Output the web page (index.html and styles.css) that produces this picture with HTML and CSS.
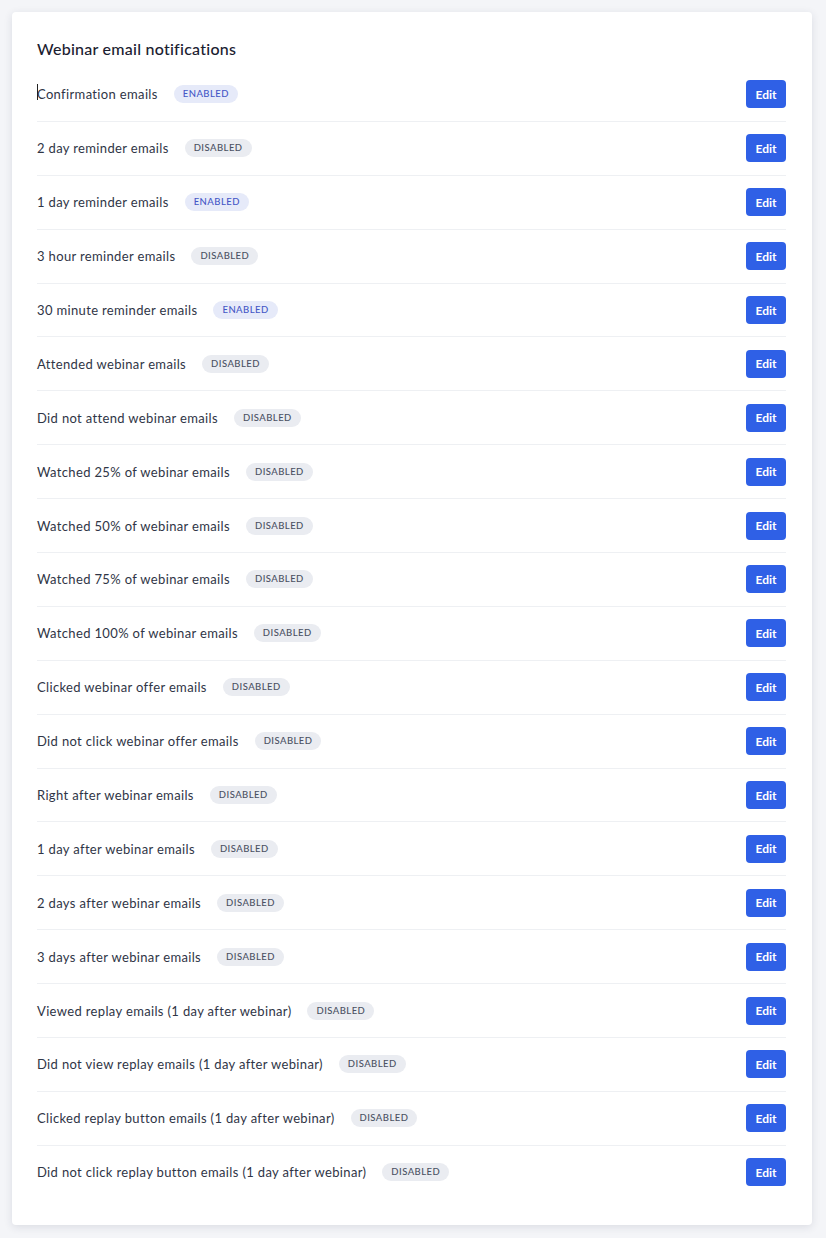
FILE: index.html
```html
<!DOCTYPE html>
<html lang="en">
<head>
    <meta charset="UTF-8">
    <meta name="viewport" content="width=device-width, initial-scale=1.0">
    <title>Webinar email notifications</title>
    <link rel="stylesheet" href="styles.css">
</head>
<body>
    <div class="card">
        <h2 class="card-title">Webinar email notifications</h2>

        <div class="notify-list">
            <div class="notify-row">
                <div class="notify-info"><span class="caret"></span><span class="notify-name">Confirmation emails</span><span class="badge badge-on">Enabled</span></div>
                <button class="edit-btn">Edit</button>
            </div>
            <div class="notify-row">
                <div class="notify-info"><span class="notify-name">2 day reminder emails</span><span class="badge">Disabled</span></div>
                <button class="edit-btn">Edit</button>
            </div>
            <div class="notify-row">
                <div class="notify-info"><span class="notify-name">1 day reminder emails</span><span class="badge badge-on">Enabled</span></div>
                <button class="edit-btn">Edit</button>
            </div>
            <div class="notify-row">
                <div class="notify-info"><span class="notify-name">3 hour reminder emails</span><span class="badge">Disabled</span></div>
                <button class="edit-btn">Edit</button>
            </div>
            <div class="notify-row">
                <div class="notify-info"><span class="notify-name">30 minute reminder emails</span><span class="badge badge-on">Enabled</span></div>
                <button class="edit-btn">Edit</button>
            </div>
            <div class="notify-row">
                <div class="notify-info"><span class="notify-name">Attended webinar emails</span><span class="badge">Disabled</span></div>
                <button class="edit-btn">Edit</button>
            </div>
            <div class="notify-row">
                <div class="notify-info"><span class="notify-name">Did not attend webinar emails</span><span class="badge">Disabled</span></div>
                <button class="edit-btn">Edit</button>
            </div>
            <div class="notify-row">
                <div class="notify-info"><span class="notify-name">Watched 25% of webinar emails</span><span class="badge">Disabled</span></div>
                <button class="edit-btn">Edit</button>
            </div>
            <div class="notify-row">
                <div class="notify-info"><span class="notify-name">Watched 50% of webinar emails</span><span class="badge">Disabled</span></div>
                <button class="edit-btn">Edit</button>
            </div>
            <div class="notify-row">
                <div class="notify-info"><span class="notify-name">Watched 75% of webinar emails</span><span class="badge">Disabled</span></div>
                <button class="edit-btn">Edit</button>
            </div>
            <div class="notify-row">
                <div class="notify-info"><span class="notify-name">Watched 100% of webinar emails</span><span class="badge">Disabled</span></div>
                <button class="edit-btn">Edit</button>
            </div>
            <div class="notify-row">
                <div class="notify-info"><span class="notify-name">Clicked webinar offer emails</span><span class="badge">Disabled</span></div>
                <button class="edit-btn">Edit</button>
            </div>
            <div class="notify-row">
                <div class="notify-info"><span class="notify-name">Did not click webinar offer emails</span><span class="badge">Disabled</span></div>
                <button class="edit-btn">Edit</button>
            </div>
            <div class="notify-row">
                <div class="notify-info"><span class="notify-name">Right after webinar emails</span><span class="badge">Disabled</span></div>
                <button class="edit-btn">Edit</button>
            </div>
            <div class="notify-row">
                <div class="notify-info"><span class="notify-name">1 day after webinar emails</span><span class="badge">Disabled</span></div>
                <button class="edit-btn">Edit</button>
            </div>
            <div class="notify-row">
                <div class="notify-info"><span class="notify-name">2 days after webinar emails</span><span class="badge">Disabled</span></div>
                <button class="edit-btn">Edit</button>
            </div>
            <div class="notify-row">
                <div class="notify-info"><span class="notify-name">3 days after webinar emails</span><span class="badge">Disabled</span></div>
                <button class="edit-btn">Edit</button>
            </div>
            <div class="notify-row">
                <div class="notify-info"><span class="notify-name">Viewed replay emails (1 day after webinar)</span><span class="badge">Disabled</span></div>
                <button class="edit-btn">Edit</button>
            </div>
            <div class="notify-row">
                <div class="notify-info"><span class="notify-name">Did not view replay emails (1 day after webinar)</span><span class="badge">Disabled</span></div>
                <button class="edit-btn">Edit</button>
            </div>
            <div class="notify-row">
                <div class="notify-info"><span class="notify-name">Clicked replay button emails (1 day after webinar)</span><span class="badge">Disabled</span></div>
                <button class="edit-btn">Edit</button>
            </div>
            <div class="notify-row">
                <div class="notify-info"><span class="notify-name">Did not click replay button emails (1 day after webinar)</span><span class="badge">Disabled</span></div>
                <button class="edit-btn">Edit</button>
            </div>
        </div>
    </div>
</body>
</html>
```

FILE: styles.css
```css
:root {
    --bg-color: #f4f5f8;
    --card-bg: #fff;
    --text-color: #2f3546;
    --title-color: #1b2030;
    --line-color: #eef0f3;
    --primary-color: #2f60e6;
    --badge-on-bg: #e6eaf9;
    --badge-on-text: #4457c6;
    --badge-off-bg: #eaecf1;
    --badge-off-text: #4a5163;
}
body {
    font-family: 'Lato', 'Noto Sans', sans-serif;
    background-color: var(--bg-color);
    color: var(--text-color);
    margin: 0;
    padding: 12px 14px 14px 12px;
}
.card {
    background-color: var(--card-bg);
    border-radius: 4px;
    box-shadow: 0 2px 8px rgba(30, 40, 70, 0.12);
    padding: 25px 26px 26px 25px;
}
.card-title {
    font-size: 16px;
    font-weight: 500;
    line-height: 24px;
    letter-spacing: 0.25px;
    color: var(--title-color);
    margin: 0 0 7px 0;
}

.notify-row {
    display: flex;
    align-items: center;
    justify-content: space-between;
    height: 52.9px;
    border-bottom: 1px solid var(--line-color);
}
.notify-row:last-child { border-bottom: none; }
.notify-info { display: flex; align-items: center; gap: 16px; position: relative; }
.notify-name { font-size: 13px; letter-spacing: 0.35px; }
.caret {
    position: absolute; left: 0; top: -1px;
    width: 1px; height: 16px; background-color: #222;
}

.badge {
    display: inline-block;
    height: 18px;
    line-height: 18px;
    padding: 0 9px;
    border-radius: 9px;
    font-size: 9.5px;
    font-weight: 500;
    letter-spacing: 0.45px;
    text-transform: uppercase;
    background-color: var(--badge-off-bg);
    color: var(--badge-off-text);
}
.badge-on { background-color: var(--badge-on-bg); color: var(--badge-on-text); }

.edit-btn {
    width: 40px; height: 28px;
    border: none; outline: none; border-radius: 4px;
    background-color: var(--primary-color);
    color: #fff;
    font-family: inherit;
    font-size: 12px;
    font-weight: 700;
    padding: 0;
    cursor: pointer;
}
.edit-btn:hover { background-color: #2550cc; }
```
